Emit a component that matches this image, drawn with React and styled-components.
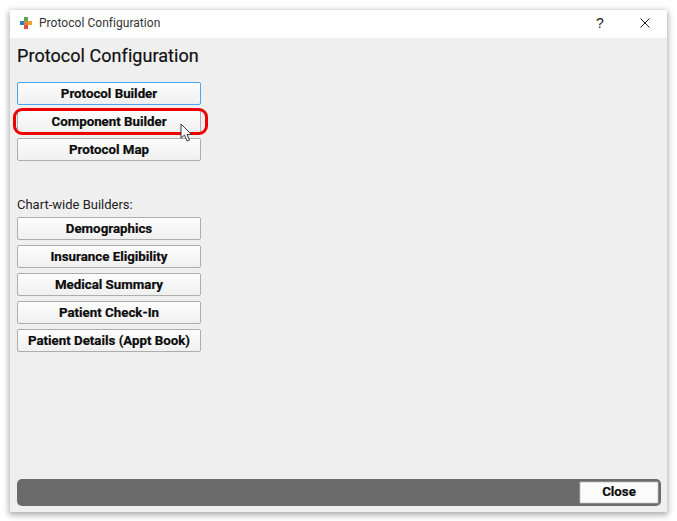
import React from "react";
import styled, { createGlobalStyle } from "styled-components";

const Global = createGlobalStyle`
  html, body { margin: 0; padding: 0; background: #fff; }
  body { width: 677px; height: 521px; overflow: hidden; font-family: Roboto, "Liberation Sans", sans-serif; }
`;
const Page = styled.div`
  width: 677px;
  height: 521px;
  padding: 10px 10px 9px 10px;
  box-sizing: border-box;
`;
const Win = styled.div`
  width: 657px;
  height: 502px;
  background: #efefef;
  display: flex;
  flex-direction: column;
  box-shadow: 0 2px 6px 1px rgba(0,0,0,.33);
`;
const TitleBar = styled.div`
  height: 28px;
  flex: none;
  box-sizing: border-box;
  padding: 0 0 2px 10px;
  background: #fff;
  display: flex;
  align-items: center;
  color: #333;
  font-size: 12px;
  font-family: Roboto, sans-serif;
`;
const TitleText = styled.span`
  margin-left: 7px;
  letter-spacing: 0.04px;
`;
const Help = styled.span`
  margin-left: auto;
  margin-right: 1px;
  width: 14px;
  text-align: center;
  font-size: 14px;
  color: #222;
  font-family: "Liberation Sans", sans-serif;
`;
const CloseIcon = styled.svg`
  width: 10px;
  height: 10px;
  margin: 0 17px 0 32px;
`;
const Body = styled.div`
  flex: 1;
  display: flex;
  flex-direction: column;
  padding: 0 6px 6px 7px;
`;
const Heading = styled.h1`
  margin: 7px 0 16px 0;
  font-size: 18px;
  line-height: 21px;
  height: 21px;
  font-weight: 400;
  color: #111;
  letter-spacing: 0.05px;
  -webkit-text-stroke: 0.2px #111;
`;
const Stack = styled.div`
  width: 184px;
  display: flex;
  flex-direction: column;
  gap: 5px;
`;
const Btn = styled.button`
  height: 23px;
  box-sizing: border-box;
  border: 1px solid ${p => (p.$focus ? "#4ba6ee" : "#adadad")};
  border-radius: 2px;
  background: linear-gradient(#fdfdfd, #f0f0f0);
  font-family: Roboto, sans-serif;
  font-weight: 700;
  font-size: 13.3px;
  color: #0c0c0c;
  padding: 0 0 1px 0;
  white-space: nowrap;
  -webkit-text-stroke: 0.2px #0c0c0c;
`;
const Label = styled.div`
  margin: 36px 0 5px 0;
  font-size: 13px;
  line-height: 15px;
  color: #222;
`;
const Footer = styled.div`
  margin-top: auto;
  height: 27px;
  border-radius: 5px;
  background: #6b6b6b;
  display: flex;
  justify-content: flex-end;
  align-items: center;
  padding-right: 2px;
`;
const CloseBtn = styled(Btn)`
  width: 80px;
  height: 23px;
  padding-bottom: 2px;
  border: 1px solid #8a8a8a;
  background: #fbfbfb;
  box-shadow: inset 0 0 0 1px #e4e4e4;
`;
const Highlight = styled.div`
  position: absolute;
  left: 13px;
  top: 108px;
  width: 195px;
  height: 27px;
  box-sizing: border-box;
  border: 3px solid #ee0000;
  border-radius: 9px;
`;
const Cursor = styled.svg`
  position: absolute;
  left: 180px;
  top: 123px;
  width: 13px;
  height: 20px;
`;

export default function App() {
  return (
    <>
      <Global />
      <Page>
        <Win>
          <TitleBar>
            <svg width="12" height="12" viewBox="0 0 12 12">
              <rect x="0" y="4" width="4" height="4" fill="#2f7fc4" />
              <rect x="4" y="0" width="4" height="4" fill="#58a845" />
              <rect x="8" y="4" width="4" height="4" fill="#f0a030" />
              <rect x="4" y="8" width="4" height="4" fill="#e0503a" />
              <rect x="4" y="4" width="4" height="4" fill="#d9883a" />
            </svg>
            <TitleText>Protocol Configuration</TitleText>
            <Help>?</Help>
            <CloseIcon viewBox="0 0 10 10">
              <path d="M0.5 0.5L9.5 9.5M9.5 0.5L0.5 9.5" stroke="#222" strokeWidth="1" fill="none" />
            </CloseIcon>
          </TitleBar>
          <Body>
            <Heading>Protocol Configuration</Heading>
            <Stack>
              <Btn $focus>Protocol Builder</Btn>
              <Btn>Component Builder</Btn>
              <Btn>Protocol Map</Btn>
            </Stack>
            <Label>Chart-wide Builders:</Label>
            <Stack>
              <Btn>Demographics</Btn>
              <Btn>Insurance Eligibility</Btn>
              <Btn>Medical Summary</Btn>
              <Btn>Patient Check-In</Btn>
              <Btn>Patient Details (Appt Book)</Btn>
            </Stack>
            <Footer>
              <CloseBtn>Close</CloseBtn>
            </Footer>
          </Body>
        </Win>
      </Page>
      <Highlight />
      <Cursor viewBox="0 0 13 20">
        <path d="M1 1L1 15L4.5 12L7 18L9.5 17L7 11.5L11.5 11.5Z" fill="#fff" stroke="#3a3a3a" strokeWidth="1" strokeLinejoin="round" />
      </Cursor>
    </>
  );
}
